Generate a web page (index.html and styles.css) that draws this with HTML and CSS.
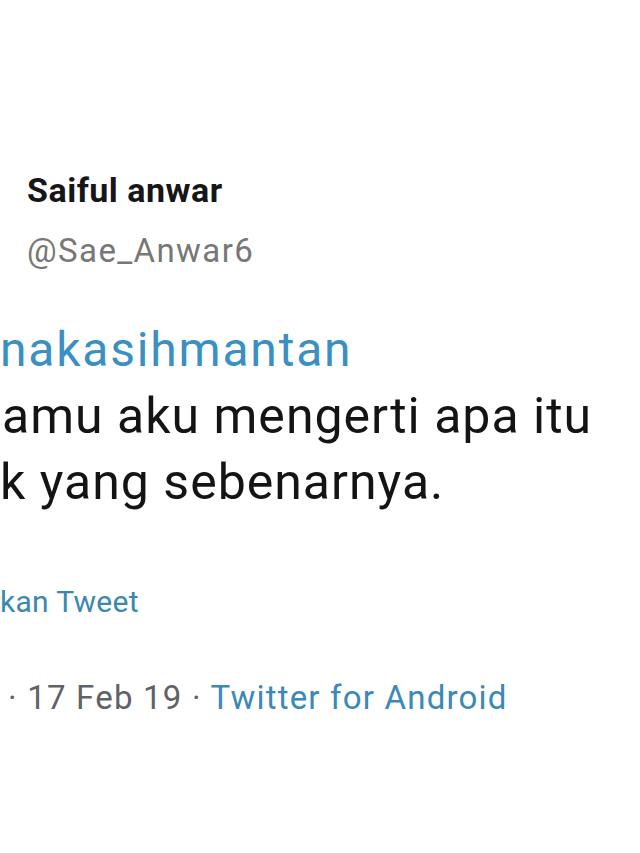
FILE: index.html
```html
<!DOCTYPE html>
<html lang="id">
<head>
<meta charset="utf-8">
<title>Tweet</title>
<link rel="stylesheet" href="styles.css">
</head>
<body>
<main class="tweet">
  <header class="author">
    <div class="name">Saiful anwar</div>
    <div class="handle">@Sae_Anwar6</div>
  </header>
  <p class="text"><span class="tag">nakasihmantan</span><br><span class="l2">amu aku mengerti apa itu</span><br><span class="l3">k yang sebenarnya.</span></p>
  <div class="translate">kan Tweet</div>
  <div class="meta"><span class="dot">·</span> 17 Feb 19 · <span class="src">Twitter for Android</span></div>
</main>
</body>
</html>
```
FILE: styles.css
```css
html, body {
  margin: 0;
  padding: 0;
  background: #ffffff;
}
body {
  width: 640px;
  height: 853px;
  overflow: hidden;
  font-family: Roboto, "Noto Sans", "Liberation Sans", sans-serif;
}
.tweet {
  padding-top: 170px;
}
.author {
  padding-left: 27px;
}
.name {
  font-size: 34px;
  line-height: 40px;
  font-weight: 700;
  letter-spacing: 0.5px;
  color: #161616;
}
.handle {
  margin-top: 21px;
  font-size: 33px;
  line-height: 40px;
  letter-spacing: 1.4px;
  color: #777777;
}
.text {
  margin: 45px 0 0 0;
  font-size: 50px;
  line-height: 66px;
  letter-spacing: 1px;
  color: #141414;
  white-space: nowrap;
}
.tag {
  font-size: 48px;
  letter-spacing: 1.8px;
  color: #3a8fc3;
}
.l2 {
  padding-left: 2px;
}
.translate {
  margin-top: 67px;
  font-size: 30px;
  line-height: 40px;
  letter-spacing: 0.3px;
  color: #3b88ad;
}
.meta {
  margin-top: 54px;
  padding-left: 8px;
  font-size: 33px;
  line-height: 44px;
  letter-spacing: 1.2px;
  color: #5f6368;
  white-space: nowrap;
}
.src {
  color: #3a89b8;
}
```
